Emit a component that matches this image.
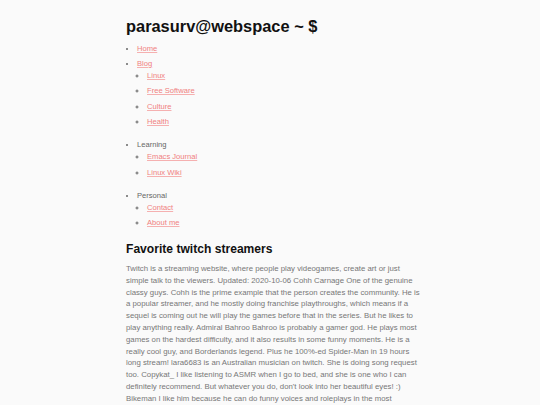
import React from 'react';

const sections = [
  { label: 'Home', href: '#' },
  {
    label: 'Blog',
    href: '#',
    children: ['Linux', 'Free Software', 'Culture', 'Health'],
  },
  { label: 'Learning', children: ['Emacs Journal', 'Linux Wiki'] },
  { label: 'Personal', children: ['Contact', 'About me'] },
];

const linkCls = 'text-[#f08080] underline decoration-[#f5b0b0]';

const App: React.FC = () => {
  return (
    <div className="min-h-[405px] bg-[#fafafa] font-['Liberation_Sans',Arial,sans-serif]">
      <main className="ml-[126px] w-[296px] pt-[14px]">
        <h1 className="text-[16.4px] font-bold leading-[24px] text-[#111]">parasurv@webspace ~ $</h1>

        <ul className="mt-[5px] list-disc pl-[11px] text-[7.6px] leading-[12px] text-[#666] marker:text-[#666]">
          {sections.map((s) => (
            <li key={s.label} className="mt-[3px] mb-[3px]">
              {s.href ? <a href={s.href} className={linkCls}>{s.label}</a> : <span>{s.label}</span>}
              {s.children && (
                <ul className="mb-[11px] list-[circle] pl-[10px]">
                  {s.children.map((c) => (
                    <li key={c} className="mb-[3.4px]">
                      <a href="#" className={linkCls}>{c}</a>
                    </li>
                  ))}
                </ul>
              )}
            </li>
          ))}
        </ul>

        <h2 className="mt-[10px] text-[12.1px] font-bold leading-[18px] text-[#111]">Favorite twitch streamers</h2>
        <p className="mt-[5px] text-[7.8px] leading-[11.8px] text-[#777]">
          Twitch is a streaming website, where people play videogames, create art or just
          <br />
          simple talk to the viewers. Updated: 2020-10-06 Cohh Carnage One of the genuine classy guys. Cohh is the
          prime example that the person creates the community. He is a popular streamer, and he mostly doing franchise
          playthroughs, which means if a sequel is coming out he will play the games before that in the series. But he
          likes to play anything really. Admiral Bahroo Bahroo is probably a gamer god. He plays most games on the
          hardest difficulty, and it also results in some funny moments. He is a really cool guy, and Borderlands
          legend. Plus he 100%-ed Spider-Man in 19 hours long stream! lara6683 is an Australian musician on twitch. She
          is doing song request too. Copykat_ I like listening to ASMR when I go to bed, and she is one who I can
          definitely recommend. But whatever you do, don't look into her beautiful eyes! :) Bikeman I like him because
          he can do funny voices and roleplays in the most unexpected situations.
        </p>
      </main>
    </div>
  );
};

export default App;
